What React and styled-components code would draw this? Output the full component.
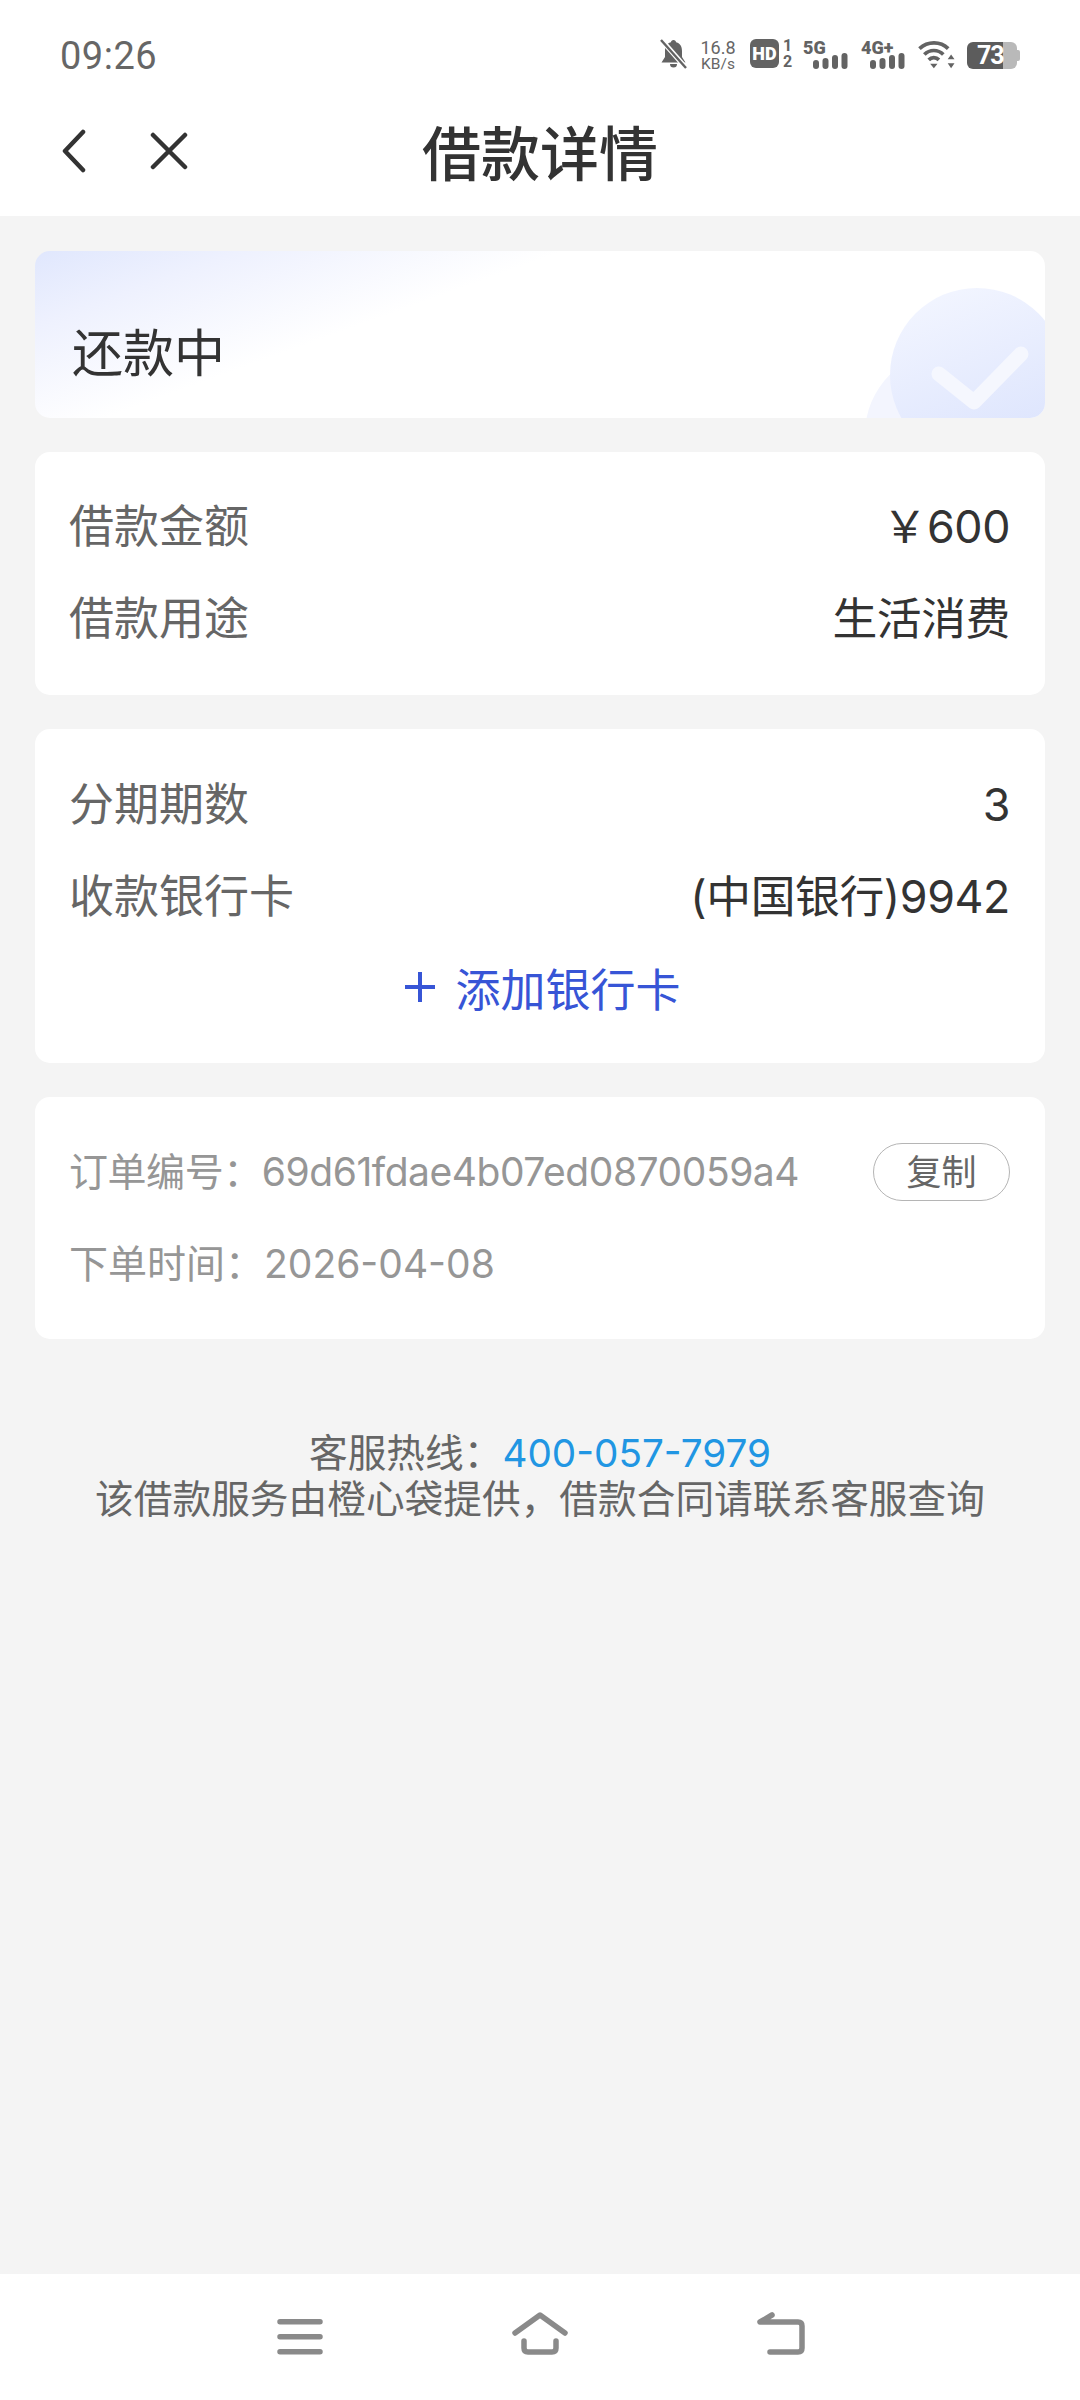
import React from 'react';
import styled, { createGlobalStyle } from 'styled-components';

const GlobalStyle = createGlobalStyle`
    html, body {
        margin: 0;
        padding: 0;
        background: #f4f4f4;
    }
    * {
        box-sizing: border-box;
    }
`;

const FONT = `Inter, "Noto Sans CJK SC", sans-serif`;

const Page = styled.div`
    width: 1080px;
    height: 2400px;
    display: flex;
    flex-direction: column;
    background: #f4f4f4;
    font-family: ${FONT};
`;

const Top = styled.header`
    height: 216px;
    background: #fff;
    display: flex;
    flex-direction: column;
`;

const StatusBar = styled.div`
    height: 100px;
    padding: 19px 60px 0 60px;
    display: flex;
    justify-content: space-between;
    align-items: flex-start;
`;

const Clock = styled.span`
    font-family: Roboto, sans-serif;
    font-size: 38px;
    line-height: 74px;
    color: #666;
    letter-spacing: 0.5px;
`;

const StatusIcons = styled.div`
    display: flex;
    align-items: flex-start;
    height: 32px;
    margin-top: 20px;
    font-family: Roboto, sans-serif;
`;

const Speed = styled.div`
    width: 36px;
    margin-left: 13px;
    display: flex;
    flex-direction: column;
    align-items: center;
    color: #666;
    font-size: 18px;
    line-height: 18px;
    white-space: nowrap;
    div + div {
        font-size: 15.5px;
        line-height: 14px;
    }
`;

const HdBox = styled.div`
    width: 29px;
    height: 29px;
    margin-left: 14px;
    border-radius: 6px;
    background: #636363;
    color: #fff;
    font-size: 18px;
    font-weight: 900;
    line-height: 29px;
    text-align: center;
`;

const SimSlots = styled.div`
    width: 11px;
    margin: -1px 0 0 3px;
    color: #636363;
    font-size: 16px;
    font-weight: 700;
    line-height: 16px;
    text-align: center;
`;

const SignalWrap = styled.div`
    position: relative;
    width: ${p => p.$w}px;
    height: 30px;
    margin-left: ${p => p.$ml}px;
`;

const SignalLabel = styled.span`
    position: absolute;
    left: 0;
    top: 0;
    color: #636363;
    font-size: 18px;
    font-weight: 900;
    line-height: 18px;
    white-space: nowrap;
`;

const Battery = styled.div`
    position: relative;
    width: 50px;
    height: 27px;
    margin: 3px 3px 0 12px;
    border-radius: 6px;
    background: linear-gradient(90deg, #5c5c5c 0 36px, #b9b9b9 36px);
    color: #fff;
    font-size: 25px;
    font-weight: 700;
    line-height: 27px;
    padding-left: 10px;
    letter-spacing: -1px;
    &::after {
        content: "";
        position: absolute;
        right: -3px;
        top: 8px;
        width: 3px;
        height: 11px;
        border-radius: 0 2px 2px 0;
        background: #b9b9b9;
    }
`;

const NavRow = styled.div`
    position: relative;
    flex: 1;
    display: flex;
    align-items: center;
    justify-content: center;
`;

const NavIcons = styled.div`
    position: absolute;
    left: 62px;
    top: 29px;
    display: flex;
    align-items: center;
    gap: 64px;
`;

const Title = styled.h1`
    margin: 0;
    font-size: 59px;
    font-weight: 500;
    line-height: 80px;
    color: #333;
    padding-bottom: 6px;
`;

const Content = styled.main`
    flex: 1;
    padding: 35px 35px 0;
    display: flex;
    flex-direction: column;
    gap: 34px;
`;

const Card = styled.section`
    background: #fff;
    border-radius: 15px;
    padding: ${p => p.$padding};
`;

const StatusCard = styled(Card)`
    position: relative;
    height: 167px;
    overflow: hidden;
    padding: 71px 0 0 37px;
    background: linear-gradient(160deg, #e0e7fd 0%, #eef1fe 14%, #fff 36%);
`;

const StatusText = styled.div`
    font-size: 51px;
    line-height: 64px;
    color: #333;
`;

const StatusDecor = styled.svg`
    position: absolute;
    right: 0;
    bottom: 0;
`;

const Row = styled.div`
    display: flex;
    justify-content: space-between;
    align-items: baseline;
    height: 92px;
    line-height: 92px;
    font-size: 45px;
`;

const Label = styled.span`
    color: #666;
`;

const Value = styled.span`
    color: #333;
    font-size: 44.8px;
    letter-spacing: -0.4px;
`;

const AddCard = styled.div`
    height: 88px;
    padding-left: 6px;
    display: flex;
    align-items: center;
    justify-content: center;
    gap: 19px;
    font-size: 45px;
    color: #3755d6;
    svg {
        display: block;
    }
`;

const OrderRow = styled.div`
    display: flex;
    justify-content: space-between;
    align-items: center;
    height: 92px;
    font-size: 39px;
    color: #969696;
`;

const OrderId = styled.span`
    letter-spacing: -0.45px;
`;

const CopyButton = styled.button`
    width: 137px;
    height: 58px;
    margin-top: 5px;
    padding: 0;
    border: 1px solid #b5b5b5;
    border-radius: 29px;
    background: #fff;
    font-family: ${FONT};
    font-size: 35px;
    line-height: 56px;
    color: #666;
`;

const Service = styled.div`
    margin-top: 57px;
    text-align: center;
    font-size: 38.7px;
    line-height: 46px;
    color: #666;
`;

const Phone = styled.span`
    color: #2196e3;
`;

const BottomNav = styled.nav`
    height: 126px;
    background: #fff;
    display: flex;
    align-items: flex-start;
    padding: 38px 0 0 277px;
    gap: 189px;
`;

const Icon = styled.svg`
    display: block;
    fill: none;
    stroke: ${p => p.$color};
    stroke-width: ${p => p.$width};
    stroke-linecap: round;
    stroke-linejoin: round;
`;

const Bars = () => (
    <svg width="35" height="16" viewBox="0 0 35 16" style={{ position: 'absolute', right: 0, bottom: 0 }}>
        <rect x="0" y="7" width="6" height="9" rx="3" fill="#636363" />
        <rect x="9.5" y="5" width="6" height="11" rx="3" fill="#636363" />
        <rect x="19" y="2" width="6" height="14" rx="3" fill="#636363" />
        <rect x="28.5" y="0" width="6" height="16" rx="3" fill="#636363" />
    </svg>
);

const Signal = ({ label, w, ml }) => (
    <SignalWrap $w={w} $ml={ml}>
        <SignalLabel>{label}</SignalLabel>
        <Bars />
    </SignalWrap>
);

const App = () => {
    return (
        <>
            <GlobalStyle />
            <Page>
                <Top>
                    <StatusBar>
                        <Clock>09:26</Clock>
                        <StatusIcons>
                            <svg width="27" height="30" viewBox="0 0 27 30">
                                <path d="M13.500 1c1.500 0 2.500 1 2.600 2.300C20.500 4.500 22 8 22 12v6l3.500 5.500H1.500L5 18v-6C5 8 6.500 4.500 10.900 3.300 11 2 12 1 13.500 1z" fill="#636363" />
                                <path d="M10 25h7a3.500 3.500 0 0 1-7 0z" fill="#636363" />
                                <path d="M2 1.500 26 29" stroke="#fff" strokeWidth="5" />
                                <path d="M1 1 26 29" stroke="#636363" strokeWidth="2.400" />
                            </svg>
                            <Speed>
                                <div>16.8</div>
                                <div>KB/s</div>
                            </Speed>
                            <HdBox>HD</HdBox>
                            <SimSlots>
                                <div>1</div>
                                <div>2</div>
                            </SimSlots>
                            <Signal label="5G" w={45} ml={10} />
                            <Signal label="4G+" w={44} ml={13} />
                            <svg width="37" height="29" viewBox="0 0 38 29" style={{ marginLeft: 13, marginTop: 1 }}>
                                <path d="M1.500 8.500C10 .5 23 .5 31 8.500" fill="none" stroke="#636363" strokeWidth="3.800" />
                                <path d="M6.500 14.500C12 9 20.500 9 26 14.500" fill="none" stroke="#636363" strokeWidth="3.800" />
                                <path d="M11 20c3-3 7.500-3 10.500 0" fill="none" stroke="#636363" strokeWidth="3.800" />
                                <path d="M12.500 24h7.500l-3.700 4.500z" fill="#636363" />
                                <path d="M34 14.500l3.500 5h-7zM34 28.500l3.500-5h-7z" fill="#636363" />
                            </svg>
                            <Battery>73</Battery>
                        </StatusIcons>
                    </StatusBar>
                    <NavRow>
                        <NavIcons>
                            <Icon width="24" height="44" viewBox="0 0 24 44" $color="#333" $width="4.500">
                                <path d="M21 3 3 22l18 19" />
                            </Icon>
                            <Icon width="38" height="38" viewBox="0 0 38 38" $color="#333" $width="4.500">
                                <path d="M3 3l32 32M35 3 3 35" />
                            </Icon>
                        </NavIcons>
                        <Title>借款详情</Title>
                    </NavRow>
                </Top>
                <Content>
                    <StatusCard>
                        <StatusText>还款中</StatusText>
                        <StatusDecor width="180" height="130" viewBox="0 0 180 130">
                            <defs>
                                <linearGradient id="decorFill" x1="0.3" y1="0" x2="0.7" y2="1">
                                    <stop offset="0" stopColor="#f2f5ff" />
                                    <stop offset="1" stopColor="#dbe3fd" />
                                </linearGradient>
                            </defs>
                            <circle cx="83" cy="146" r="83" fill="#f3f5fe" />
                            <circle cx="112" cy="87" r="87" fill="url(#decorFill)" />
                            <path d="M74 86l35 28 47-48" fill="none" stroke="#f5f7fe" strokeWidth="15" strokeLinecap="round" strokeLinejoin="round" />
                        </StatusDecor>
                    </StatusCard>
                    <Card $padding="29px 35px 30px 34px">
                        <Row>
                            <Label>借款金额</Label>
                            <Value>￥600</Value>
                        </Row>
                        <Row>
                            <Label>借款用途</Label>
                            <Value>生活消费</Value>
                        </Row>
                    </Card>
                    <Card $padding="30px 35px 32px 34px">
                        <Row>
                            <Label>分期期数</Label>
                            <Value>3</Value>
                        </Row>
                        <Row>
                            <Label>收款银行卡</Label>
                            <Value>(中国银行)9942</Value>
                        </Row>
                        <AddCard>
                            <svg width="32" height="32" viewBox="0 0 32 32">
                                <path d="M16 1v30M1 16h30" stroke="#3755d6" strokeWidth="4" />
                            </svg>
                            添加银行卡
                        </AddCard>
                    </Card>
                    <Card $padding="26px 35px 32px 34px">
                        <OrderRow>
                            <OrderId>订单编号：69d61fdae4b07ed0870059a4</OrderId>
                            <CopyButton>复制</CopyButton>
                        </OrderRow>
                        <OrderRow>
                            <span>下单时间：2026-04-08</span>
                        </OrderRow>
                    </Card>
                    <Service>
                        <div>客服热线：<Phone>400-057-7979</Phone></div>
                        <div>该借款服务由橙心袋提供，借款合同请联系客服查询</div>
                    </Service>
                </Content>
                <BottomNav>
                    <Icon width="46" height="43" viewBox="0 0 46 43" $color="#8a8a8a" $width="5.500">
                        <path d="M3 9.700h40M3 24.700h40M3 39.700h40" />
                    </Icon>
                    <Icon width="56" height="43" viewBox="0 0 56 43" $color="#8a8a8a" $width="5.500">
                        <path d="M3 21 28 3l25 18" />
                        <path d="M12 29v7q0 4 4 4h24q4 0 4-4v-7" />
                    </Icon>
                    <Icon width="48" height="43" viewBox="0 0 48 43" $color="#8a8a8a" $width="5.500">
                        <path d="M15 3 3 10h38q4 0 4 4v22q0 4-4 4H13" />
                    </Icon>
                </BottomNav>
            </Page>
        </>
    );
};

export default App;
